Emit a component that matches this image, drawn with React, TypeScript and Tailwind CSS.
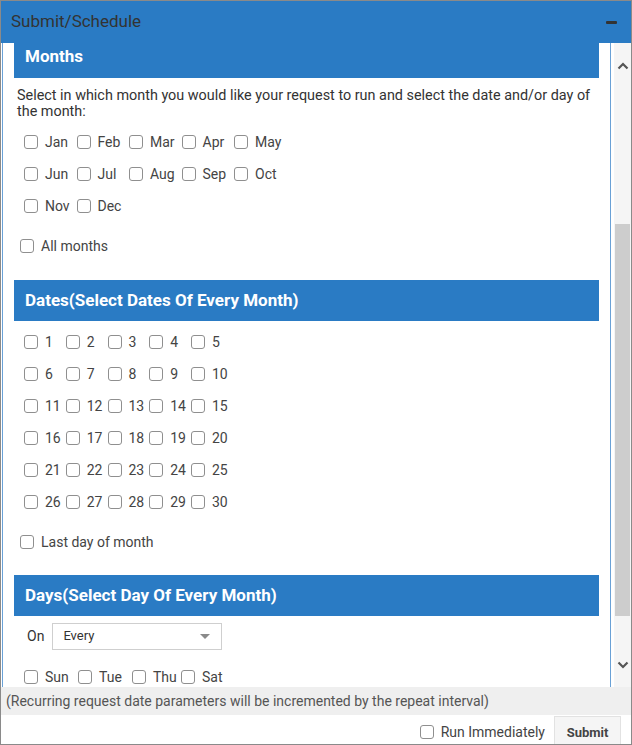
import React from 'react';

const font = { fontFamily: 'Roboto, "Noto Sans", Arial, sans-serif' };

const months = [
  ['Jan', 'Feb', 'Mar', 'Apr', 'May'],
  ['Jun', 'Jul', 'Aug', 'Sep', 'Oct'],
  ['Nov', 'Dec'],
];

const dates = [
  [1, 2, 3, 4, 5],
  [6, 7, 8, 9, 10],
  [11, 12, 13, 14, 15],
  [16, 17, 18, 19, 20],
  [21, 22, 23, 24, 25],
  [26, 27, 28, 29, 30],
];

const Box = () => (
  <span className="inline-block w-[14px] h-[14px] shrink-0 rounded-[3px] border border-[#8f8f8f] bg-white" />
);

const Check = ({ label, className = '' }: { label: string; className?: string }) => (
  <div className={`flex items-center gap-[7px] shrink-0 ${className}`}>
    <Box />
    <span className="text-[14px] text-[#444]">{label}</span>
  </div>
);

const SectionHeader = ({ title, className = '' }: { title: string; className?: string }) => (
  <div className={`bg-[#2a7bc4] flex items-center pl-[11px] text-white font-bold text-[17px] ${className}`}>
    {title}
  </div>
);

const Chevron = ({ up }: { up?: boolean }) => (
  <svg width="12" height="8" viewBox="0 0 12 8">
    <path
      d={up ? 'M1.5 6.5 L6 2 L10.5 6.5' : 'M1.5 1.5 L6 6 L10.5 1.5'}
      fill="none"
      stroke="#555"
      strokeWidth="2.2"
    />
  </svg>
);

export default function App() {
  return (
    <div style={font} className="w-[632px] h-[745px] border border-[#8a8a8a] flex flex-col bg-white overflow-hidden">
      {/* title bar */}
      <div className="h-[42px] shrink-0 bg-[#2a7bc4] flex items-center justify-between pl-[10px] pr-[14px]">
        <span className="text-[17px] text-[#333]">Submit/Schedule</span>
        <span className="block w-[11px] h-[3px] rounded-[1px] bg-[#333]" />
      </div>

      {/* scroll area */}
      <div className="flex-1 flex min-h-0 pl-[1px]">
        <div className="flex-1 min-h-0 overflow-hidden border-l border-r border-[#6aa1d6]">
          <div className="-mt-[7px] px-[11px]">
            <SectionHeader title="Months" className="h-[42px]" />
            <p className="mt-[10px] px-[3px] text-[14.4px] leading-[16px] text-[#333]">
              Select in which month you would like your request to run and select the date and/or day of the month:
            </p>
            <div className="mt-[6px] pl-[10px]">
              {months.map((row, i) => (
                <div key={i} className="h-[32px] flex items-center">
                  {row.map((m) => (
                    <Check key={m} label={m} className="w-[52.5px]" />
                  ))}
                </div>
              ))}
            </div>
            <div className="mt-[8px] h-[32px] flex items-center pl-[6px]">
              <Check label="All months" />
            </div>

            <SectionHeader title="Dates(Select Dates Of Every Month)" className="mt-[18px] h-[41px]" />
            <div className="mt-[5px] pl-[10px]">
              {dates.map((row, i) => (
                <div key={i} className="h-[32px] flex items-center">
                  {row.map((d) => (
                    <Check key={d} label={String(d)} className="w-[41.75px]" />
                  ))}
                </div>
              ))}
            </div>
            <div className="mt-[8px] h-[32px] flex items-center pl-[6px]">
              <Check label="Last day of month" />
            </div>

            <SectionHeader title="Days(Select Day Of Every Month)" className="mt-[17px] h-[41px]" />
            <div className="mt-[7px] flex items-center pl-[13px] gap-[8px]">
              <span className="text-[14px] text-[#333]">On</span>
              <div className="w-[170px] h-[27px] border border-[#cfcfcf] flex items-center justify-between pl-[10px] pr-[11px]">
                <span className="text-[13px] text-[#333] -mt-[2px]">Every</span>
                <svg width="10" height="6" viewBox="0 0 10 6">
                  <path d="M0 0 L10 0 L5 5 Z" fill="#8a8a8a" />
                </svg>
              </div>
            </div>
            <div className="mt-[11px] h-[32px] flex items-center pl-[10px]">
              <Check label="Sun" className="w-[54px]" />
              <Check label="Tue" className="w-[54px]" />
              <Check label="Thu" className="w-[49px]" />
              <Check label="Sat" />
            </div>
          </div>
        </div>

        {/* scrollbar */}
        <div className="w-[17px] ml-[3px] shrink-0 bg-[#f5f5f5] flex flex-col items-center">
          <div className="h-[46px] flex items-center justify-center">
            <Chevron up />
          </div>
          <div className="mt-[135px] w-[15px] h-[392px] bg-[#cdcdcd]" />
          <div className="mt-[45px] flex justify-center">
            <Chevron />
          </div>
        </div>
      </div>

      {/* footer */}
      <div className="h-[28px] shrink-0 bg-[#efefef] flex items-center pl-[5px] text-[14px] text-[#555]">
        (Recurring request date parameters will be incremented by the repeat interval)
      </div>
      <div className="h-[29px] shrink-0 flex items-stretch justify-end pr-[10px]">
        <div className="flex items-center gap-[7px] mr-[9px] pt-[5px]">
          <Box />
          <span className="text-[14px] text-[#444]">Run Immediately</span>
        </div>
        <div className="w-[67px] mt-[1px] pt-[4px] bg-[#f5f5f5] border-l border-r border-t border-[#e2e2e2] flex items-center justify-center text-[13px] font-bold text-[#444]">
          Submit
        </div>
      </div>
    </div>
  );
}
